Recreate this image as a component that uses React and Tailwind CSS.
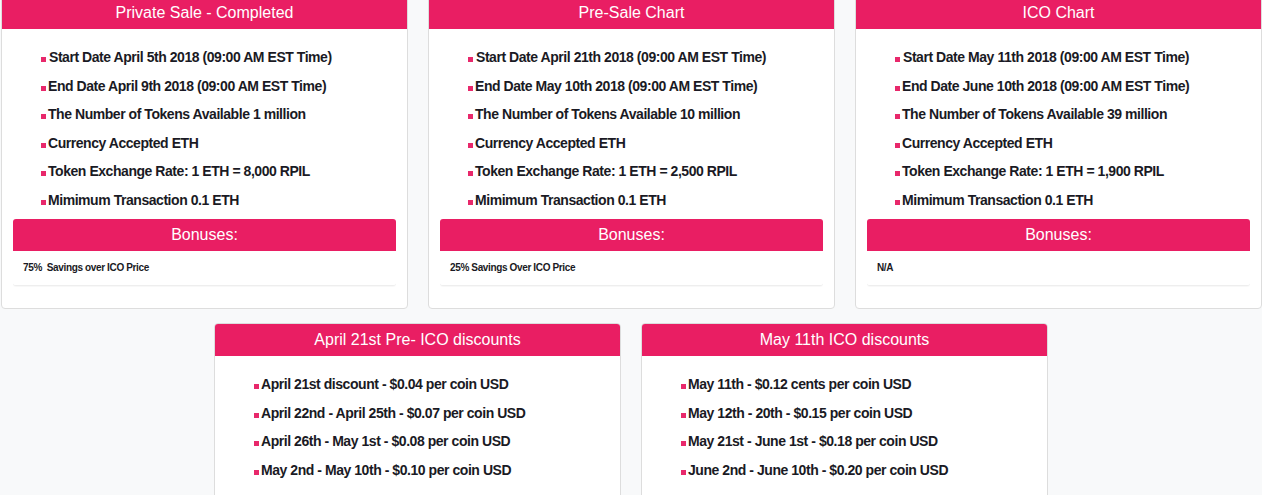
import React from "react";

const top = [
  {
    title: "Private Sale - Completed",
    items: [
      "Start Date April 5th 2018 (09:00 AM EST Time)",
      "End Date April 9th 2018 (09:00 AM EST Time)",
      "The Number of Tokens Available 1 million",
      "Currency Accepted ETH",
      "Token Exchange Rate: 1 ETH = 8,000 RPIL",
      "Mimimum Transaction 0.1 ETH",
    ],
    bonus: "75%\u00a0 Savings over ICO Price",
  },
  {
    title: "Pre-Sale Chart",
    items: [
      "Start Date April 21th 2018 (09:00 AM EST Time)",
      "End Date May 10th 2018 (09:00 AM EST Time)",
      "The Number of Tokens Available 10 million",
      "Currency Accepted ETH",
      "Token Exchange Rate: 1 ETH = 2,500 RPIL",
      "Mimimum Transaction 0.1 ETH",
    ],
    bonus: "25% Savings Over ICO Price",
  },
  {
    title: "ICO Chart",
    items: [
      "Start Date May 11th 2018 (09:00 AM EST Time)",
      "End Date June 10th 2018 (09:00 AM EST Time)",
      "The Number of Tokens Available 39 million",
      "Currency Accepted ETH",
      "Token Exchange Rate: 1 ETH = 1,900 RPIL",
      "Mimimum Transaction 0.1 ETH",
    ],
    bonus: "N/A",
  },
];

const bottom = [
  {
    title: "April 21st Pre- ICO discounts",
    items: [
      "April 21st discount - $0.04 per coin USD",
      "April 22nd - April 25th - $0.07 per coin USD",
      "April 26th - May 1st - $0.08 per coin USD",
      "May 2nd - May 10th - $0.10 per coin USD",
    ],
  },
  {
    title: "May 11th ICO discounts",
    items: [
      "May 11th - $0.12 cents per coin USD",
      "May 12th - 20th - $0.15 per coin USD",
      "May 21st - June 1st - $0.18 per coin USD",
      "June 2nd - June 10th - $0.20 per coin USD",
    ],
  },
];

function List({ items, shiftFirst }) {
  return (
    <ul className="pl-[39px] pt-[14px]">
      {items.map((t, i) => (
        <li
          key={i}
          className="h-[28.6px] leading-[28.6px] text-[14px] font-bold tracking-[-0.45px] text-[#1a1a24] whitespace-pre"
        >
          <span
            className={
              shiftFirst && i === 0
                ? "inline-block w-[5px] h-[5px] bg-[#e8286b] mr-[3px]"
                : "inline-block w-[5px] h-[5px] bg-[#e8286b] mr-[2px]"
            }
          />
          {t}
        </li>
      ))}
    </ul>
  );
}

function Header({ children }) {
  return (
    <div className="h-[32px] bg-[#e91e63] text-white text-[16px] leading-[32px] text-center rounded-t-[3px]">
      {children}
    </div>
  );
}

export default function App() {
  return (
    <div className="min-h-screen bg-[#f8f9fa] font-['Liberation_Sans',Arial,sans-serif] pb-10">
      <div className="-mt-1 flex gap-[20px] pl-[1px]">
        {top.map((c, i) => (
          <div
            key={i}
            className="w-[407px] bg-white border border-[#dddddd] rounded-[4px] h-[313px] flex flex-col"
          >
            <Header>{c.title}</Header>
            <List items={c.items} shiftFirst />
            <div className="mx-[11px] mt-[4px] bg-white rounded-[3px] border-b border-[#eeeeee] shadow-[0_1px_1px_rgba(0,0,0,0.03)]">
              <div className="h-[32px] bg-[#e91e63] text-white text-[16px] leading-[32px] text-center rounded-t-[3px]">
                Bonuses:
              </div>
              <div className="h-[34px] pl-[10px] text-[10px] font-bold tracking-[-0.36px] leading-[34px] text-[#1a1a24] whitespace-pre">
                {c.bonus}
              </div>
            </div>
          </div>
        ))}
      </div>
      <div className="mt-[14px] flex justify-center gap-[20px]">
        {bottom.map((c, i) => (
          <div
            key={i}
            className="w-[407px] bg-white border border-[#dddddd] rounded-[4px] h-[220px]"
          >
            <Header>{c.title}</Header>
            <List items={c.items} />
          </div>
        ))}
      </div>
    </div>
  );
}
